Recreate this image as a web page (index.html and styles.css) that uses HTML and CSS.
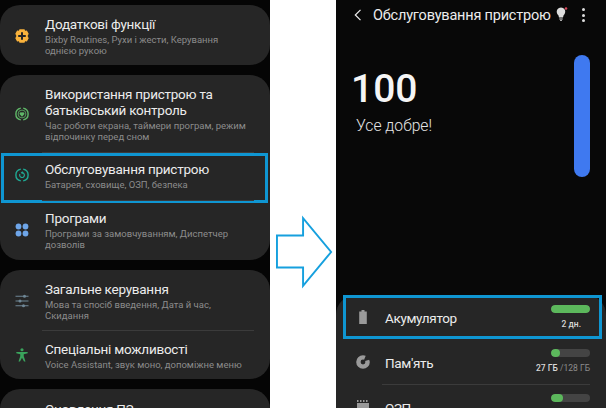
FILE: index.html
```html
<!DOCTYPE html>
<html lang="uk">
<head>
    <meta charset="UTF-8">
    <meta name="viewport" content="width=device-width, initial-scale=1.0">
    <title>Обслуговування пристрою</title>
    <link rel="stylesheet" href="styles.css">
</head>
<body>
    <div class="main">
        <div class="settings">
            <div class="card">
                <div class="row">
                    <svg class="icon" viewBox="0 0 14 14"><path fill="#f9b23c" d="M4.500.3h5l.6 1.500 1.800-.2 1.800 3.200L12.600 7l1.100 2.200-1.800 3.200-1.800-.2-.6 1.500h-5l-.6-1.500-1.800.2L.3 9.200 1.400 7 .3 4.800l1.800-3.200 1.800.2z"/><path fill="#262626" d="M6 3.200h2V6h2.800v2H8v2.800H6V8H3.200V6H6z"/></svg>
                    <div class="text">
                        <div class="title">Додаткові функції</div>
                        <div class="sub">Bixby Routines, Рухи і жести, Керування<br>однією рукою</div>
                    </div>
                </div>
            </div>
            <div class="card">
                <div class="row row-tall">
                    <svg class="icon" viewBox="0 0 14 14"><path fill="none" stroke="#5fb868" stroke-width="1.400" d="M5.800 1.100a6 6 0 0 0 0 11.800M8.200 1.100a6 6 0 0 1 0 11.800"/><circle cx="7" cy="7" r="3.900" fill="none" stroke="#5fb868" stroke-width=".8"/><path fill="#5fb868" d="M7 9.700 4.700 7.300a1.500 1.500 0 0 1 2.300-1.800 1.500 1.500 0 0 1 2.300 1.800z"/></svg>
                    <div class="text">
                        <div class="title">Використання пристрою та<br>батьківський контроль</div>
                        <div class="sub">Час роботи екрана, таймери програм, режим<br>відпочинку перед сном</div>
                    </div>
                </div>
                <div class="row row-line row-picked">
                    <svg class="icon" viewBox="0 0 14 14"><path fill="none" stroke="#1fa893" stroke-width="1.400" d="M5.800 1.100a6 6 0 0 0 0 11.800M8.200 1.100a6 6 0 0 1 0 11.800"/><path fill="none" stroke="#1fa893" stroke-width="1.200" d="M4.900 6a2.400 2.400 0 1 0 2.100-1.300"/><path fill="#1fa893" d="M7.600 3 5.700 4.700 7.600 6.200z"/></svg>
                    <div class="text">
                        <div class="title">Обслуговування пристрою</div>
                        <div class="sub">Батарея, сховище, ОЗП, безпека</div>
                    </div>
                </div>
                <div class="row row-line row-apps">
                    <svg class="icon" viewBox="0 0 14 14"><g fill="#6ea5e8"><circle cx="3.500" cy="3.500" r="2.900"/><circle cx="10.500" cy="3.500" r="2.900"/><circle cx="3.500" cy="10.500" r="2.900"/><circle cx="10.500" cy="10.500" r="2.900"/></g></svg>
                    <div class="text">
                        <div class="title">Програми</div>
                        <div class="sub">Програми за замовчуванням, Диспетчер<br>дозволів</div>
                    </div>
                </div>
            </div>
            <div class="card">
                <div class="row">
                    <svg class="icon" viewBox="0 0 14 14"><g fill="#6f8796"><path d="M.500 1.800h13v1h-13zM.500 6.500h13v1h-13zM.500 11.200h13v1h-13z"/><circle cx="9.500" cy="2.300" r="1.500"/><circle cx="5" cy="7" r="1.500"/><circle cx="8.500" cy="11.700" r="1.500"/></g></svg>
                    <div class="text">
                        <div class="title">Загальне керування</div>
                        <div class="sub">Мова та спосіб введення, Дата й час,<br>Скидання</div>
                    </div>
                </div>
                <div class="row row-line row-short">
                    <svg class="icon" viewBox="0 0 14 16"><g fill="#3aa35c"><circle cx="7" cy="2" r="1.800"/><path d="M.500 4.500h13v1.500L9 7v2.500L11 15.500H9.300L7 11l-2.300 4.500H3L5 9.500V7L.500 6z"/></g></svg>
                    <div class="text">
                        <div class="title">Спеціальні можливості</div>
                        <div class="sub">Voice Assistant, звук моно, допоміжне меню</div>
                    </div>
                </div>
            </div>
            <div class="card card-cut">
                <div class="row">
                    <div class="text">
                        <div class="title">Оновлення ПЗ</div>
                    </div>
                </div>
            </div>
        </div>

        <div class="gutter">
            <svg class="arrow" viewBox="0 0 60 74"><path fill="#fff" stroke="#16a0de" stroke-width="2" d="M1 20h27V2l29 35-29 35V53H1z"/></svg>
        </div>

        <div class="care">
            <div class="topbar">
                <svg class="back" viewBox="0 0 8 12"><path fill="none" stroke="#eee" stroke-width="1.200" d="M6.500.8 1.300 6l5.200 5.200"/></svg>
                <div class="topbar-title">Обслуговування пристрою</div>
                <svg class="bulb" viewBox="0 0 14 16"><path fill="#ddd" d="M5 1a4.600 4.600 0 0 1 4 0c3 1.500 2.800 5.500.6 7.200L9 10.500H5l-.6-2.300C2.200 6.500 2 2.500 5 1z"/><path fill="#ddd" d="M5.300 11.500h3.400v1H5.300zM6 13.200h2v.8H6z"/><circle cx="12" cy="1.500" r="1.300" fill="#d8475a"/></svg>
                <div class="dots"><span></span><span></span><span></span></div>
            </div>
            <div class="summary">
                <div>
                    <div class="score">100</div>
                    <div class="status">Усе добре!</div>
                </div>
                <div class="gauge"></div>
            </div>
            <div class="panel">
                <div class="item item-picked">
                    <svg class="item-icon" viewBox="0 0 14 14"><path fill="#9a9a9a" d="M5.500 0h3v1.500h2.300V14H3.200V1.500h2.300z"/></svg>
                    <div class="item-name">Акумулятор</div>
                    <div class="item-info">
                        <div class="bar"><div class="fill" style="width:100%"></div></div>
                        <div class="note">2 дн.</div>
                    </div>
                </div>
                <div class="item">
                    <svg class="item-icon" viewBox="0 0 14 14"><circle cx="7" cy="7" r="4.600" fill="none" stroke="#9a9a9a" stroke-width="4.400"/><path fill="#262626" d="M7.400 6.400 10 0h4v4.600z"/></svg>
                    <div class="item-name">Пам'ять</div>
                    <div class="item-info">
                        <div class="bar"><div class="fill" style="width:23%"></div></div>
                        <div class="note">27 ГБ <span class="note-dim">/128 ГБ</span></div>
                    </div>
                </div>
                <div class="item item-line">
                    <svg class="item-icon" viewBox="0 0 14 14"><path fill="#9a9a9a" d="M1 3h12v11H1zM1 0h1.500v2H1zM4 0h1.500v2H4zM7 0h1.500v2H7zM10 0h1.500v2H10z"/></svg>
                    <div class="item-name">ОЗП</div>
                    <div class="item-info">
                        <div class="bar"><div class="fill" style="width:31%"></div></div>
                    </div>
                </div>
            </div>
        </div>
    </div>
</body>
</html>
```

FILE: styles.css
```css
html,body
{
    padding: 0;
    margin: 0;
    background: #fff;
}
*
{
    box-sizing: border-box;
}

.main
{
    width: 606px;
    height: 408px;
    display: flex;
    overflow: hidden;
    font-family: Roboto, sans-serif;
}

/* left screen */
.settings
{
    width: 270px;
    height: 408px;
    padding-top: 5px;
    display: flex;
    flex-direction: column;
    gap: 10px;
    background: #050505;
    overflow: hidden;
    flex-shrink: 0;
}
.card
{
    background: #262626;
    border-radius: 20px;
    flex-shrink: 0;
}
.card-cut
{
    height: 40px;
}
.row
{
    position: relative;
    display: flex;
    align-items: center;
    padding: 1px 0 0 15px;
    height: 60px;
}
.row-tall
{
    height: 77px;
}
.row-short
{
    height: 49px;
}
.row-line::before
{
    content: "";
    position: absolute;
    top: 0;
    left: 42px;
    right: 16px;
    height: 1px;
    background: #3b3b3b;
}
.row-picked
{
    height: 48px;
    padding: 0 0 2px 15px;
}
.row-apps
{
    padding-top: 0;
}
.row-picked::after
{
    content: "";
    position: absolute;
    top: 1px;
    left: 1px;
    right: 2px;
    bottom: -3px;
    border: 3px solid #0f96d2;
}
.icon
{
    width: 14px;
    height: 14px;
    flex-shrink: 0;
    margin-right: 16px;
}
.title
{
    font-size: 13.500px;
    letter-spacing: -0.25px;
    line-height: 16px;
    color: #ececec;
}
.sub
{
    font-size: 9.500px;
    line-height: 11px;
    margin-top: 2px;
    color: #8c8c8c;
}
.card-cut .row
{
    padding-left: 45px;
    align-items: flex-start;
    padding-top: 12px;
}

/* arrow between the screens */
.gutter
{
    width: 66px;
    flex-shrink: 0;
    padding: 216px 0 0 6px;
}
.arrow
{
    display: block;
    width: 58px;
    height: 72px;
    overflow: visible;
}

/* right screen */
.care
{
    width: 270px;
    height: 408px;
    flex-shrink: 0;
    background: #080808;
    display: flex;
    flex-direction: column;
    overflow: hidden;
}
.topbar
{
    height: 30px;
    display: flex;
    align-items: center;
    padding-left: 18px;
}
.back
{
    width: 8px;
    height: 12px;
    margin-right: 11px;
    flex-shrink: 0;
}
.topbar-title
{
    font-size: 14.500px;
    letter-spacing: -0.2px;
    color: #ececec;
    white-space: nowrap;
    width: 181px;
}
.bulb
{
    width: 14px;
    height: 16px;
    flex-shrink: 0;
}
.dots
{
    margin-left: 14px;
    display: flex;
    flex-direction: column;
    gap: 2.500px;
}
.dots span
{
    width: 3px;
    height: 3px;
    border-radius: 50%;
    background: #ddd;
}
.summary
{
    height: 265px;
    display: flex;
    justify-content: space-between;
    padding: 25px 16px 0 17px;
}
.score
{
    font-size: 39px;
    font-weight: 500;
    line-height: 44px;
    margin: 12px 0 0 -2px;
    color: #f5f5f5;
}
.status
{
    font-size: 15.700px;
    font-weight: 300;
    line-height: 18px;
    margin: 6px 0 0 3px;
    color: #e4e4e4;
}
.gauge
{
    width: 16px;
    height: 122px;
    border-radius: 8px;
    background: #3f79f0;
}
.panel
{
    height: 113px;
    background: #262626;
    border-radius: 20px 20px 0 0;
}
.item
{
    position: relative;
    display: flex;
    align-items: center;
    height: 45px;
    padding: 0 16px 0 20px;
}
.item-picked
{
    height: 44px;
}
.item-picked::after
{
    content: "";
    position: absolute;
    inset: 0 4px 0 7px;
    border: 3px solid #0f96d2;
}
.item-line::before
{
    content: "";
    position: absolute;
    top: 0;
    left: 46px;
    right: 16px;
    height: 1px;
    background: #3b3b3b;
}
.item-icon
{
    width: 14px;
    height: 14px;
    flex-shrink: 0;
    margin-right: 15px;
}
.item-name
{
    flex: 1;
    font-size: 13.500px;
    letter-spacing: -0.35px;
    padding-top: 2px;
    color: #ececec;
}
.item-info
{
    width: 54px;
    display: flex;
    flex-direction: column;
    align-items: flex-end;
    align-self: flex-start;
    padding-top: 10px;
}
.bar
{
    width: 39px;
    height: 8px;
    border-radius: 4px;
    background: #444;
    overflow: hidden;
}
.fill
{
    height: 100%;
    border-radius: 4px;
    background: #5cb85c;
}
.note
{
    font-size: 8.500px;
    line-height: 11px;
    margin-top: 6px;
    font-weight: 500;
    color: #d8d8d8;
    white-space: nowrap;
}
.item-picked .note
{
    margin-right: 9px;
}
.note-dim
{
    color: #8c8c8c;
    font-weight: 400;
}
```
